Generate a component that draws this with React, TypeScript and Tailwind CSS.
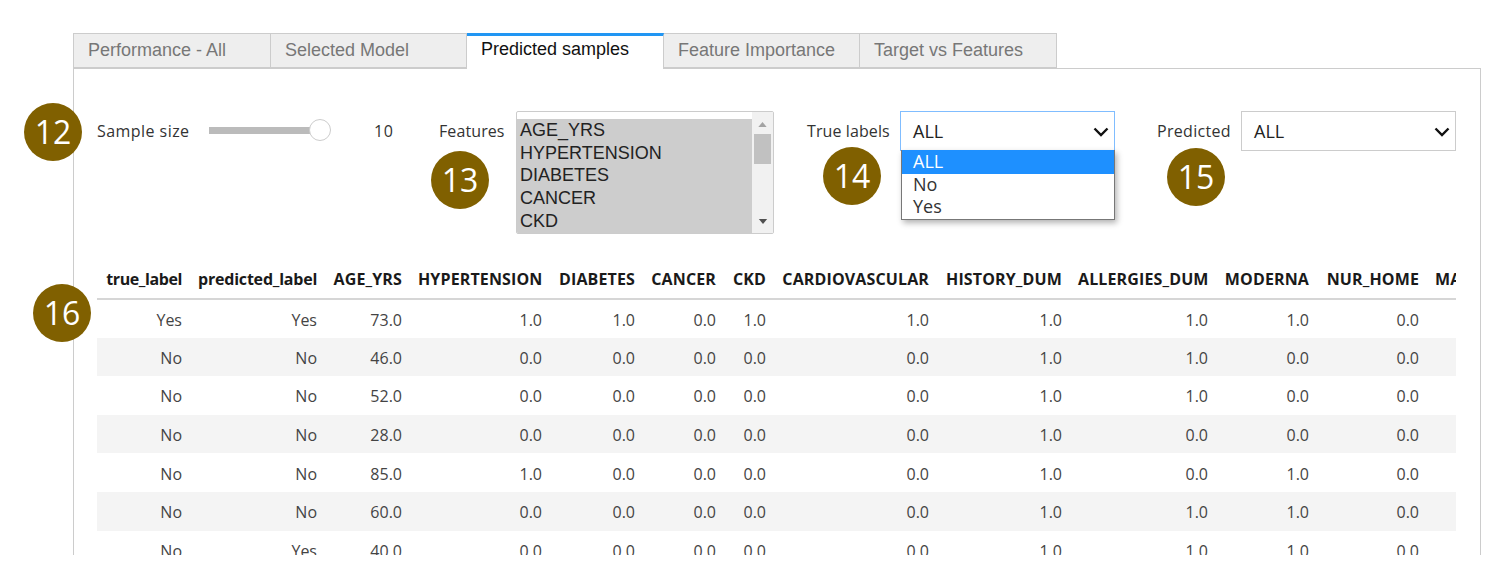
import React from 'react';

const tabs = [
  { label: 'Performance - All', width: 'w-[198px]' },
  { label: 'Selected Model', width: 'w-[196px]' },
  { label: 'Predicted samples', width: 'w-[197px]', active: true },
  { label: 'Feature Importance', width: 'w-[196px]' },
  { label: 'Target vs Features', width: 'w-[197px]' },
];

const columns = [
  { name: 'true_label', width: 'w-[93px]', extra: 'tracking-[-0.4px]' },
  { name: 'predicted_label', width: 'w-[135px]', extra: 'tracking-[-0.2px]' },
  { name: 'AGE_YRS', width: 'w-[85px]' },
  { name: 'HYPERTENSION', width: 'w-[140px]' },
  { name: 'DIABETES', width: 'w-[93px]' },
  { name: 'CANCER', width: 'w-[81px]' },
  { name: 'CKD', width: 'w-[50px]' },
  { name: 'CARDIOVASCULAR', width: 'w-[163px]' },
  { name: 'HISTORY_DUM', width: 'w-[133px]' },
  { name: 'ALLERGIES_DUM', width: 'w-[146px]' },
  { name: 'MODERNA', width: 'w-[101px]' },
  { name: 'NUR_HOME', width: 'w-[110px]' },
  { name: 'MALE', width: 'w-[60px]' },
];

const rows = [
  ['Yes', 'Yes', '73.0', '1.0', '1.0', '0.0', '1.0', '1.0', '1.0', '1.0', '1.0', '0.0', ''],
  ['No', 'No', '46.0', '0.0', '0.0', '0.0', '0.0', '0.0', '1.0', '1.0', '0.0', '0.0', ''],
  ['No', 'No', '52.0', '0.0', '0.0', '0.0', '0.0', '0.0', '1.0', '1.0', '0.0', '0.0', ''],
  ['No', 'No', '28.0', '0.0', '0.0', '0.0', '0.0', '0.0', '1.0', '0.0', '0.0', '0.0', ''],
  ['No', 'No', '85.0', '1.0', '0.0', '0.0', '0.0', '0.0', '1.0', '0.0', '1.0', '0.0', ''],
  ['No', 'No', '60.0', '0.0', '0.0', '0.0', '0.0', '0.0', '1.0', '1.0', '1.0', '0.0', ''],
  ['No', 'Yes', '40.0', '0.0', '0.0', '0.0', '0.0', '0.0', '1.0', '1.0', '1.0', '0.0', ''],
];

const features = ['AGE_YRS', 'HYPERTENSION', 'DIABETES', 'CANCER', 'CKD'];

const Badge = ({ n, className }: { n: string; className: string }) => (
  <div className={`absolute flex h-[58px] w-[58px] items-center justify-center rounded-full bg-[#806000] text-[32px] text-white ${className}`}>
    {n}
  </div>
);

const Chevron = () => (
  <svg width="16" height="10" viewBox="0 0 16 10" className="absolute right-[5px] top-[15px]">
    <path d="M1.5 1.5 L8 8 L14.5 1.5" fill="none" stroke="#111" strokeWidth="2.4" />
  </svg>
);

const Select = ({ focused }: { focused?: boolean }) => (
  <div className={`relative h-[40px] w-[215px] border pl-[12px] text-[18px] leading-[38px] text-[#222] ${focused ? 'border-[#80bdff]' : 'border-[#ccc]'}`}>
    ALL
    <Chevron />
  </div>
);

export default function App() {
  return (
    <div className="relative h-[576px] w-[1503px] overflow-hidden bg-white pl-[73px] pt-[33px] font-['Open_Sans',sans-serif]">
      <div className="flex h-[35px] font-['Liberation_Sans',sans-serif] text-[18px]">
        {tabs.map((t) => (
          <div
            key={t.label}
            className={
              t.active
                ? `${t.width} relative z-10 h-[36px] border-t-[3px] border-r border-t-[#2196f3] border-r-[#ccc] bg-white pl-[14px] leading-[26px] text-[#111]`
                : `${t.width} border border-l-0 first:border-l border-[#ccc] bg-[#eee] pl-[14px] leading-[33px] text-[#777]`
            }
          >
            {t.label}
          </div>
        ))}
      </div>

      <div className="h-[487px] w-[1408px] overflow-hidden border-x border-t border-[#ccc] pl-[23px] pt-[42px]">
        <div className="flex items-start text-[16px] leading-[40px] text-[#333]">
          <div className="w-[112px] tracking-[0.45px]">Sample size</div>
          <div className="relative mt-[16px] h-[7px] w-[122px]">
            <div className="h-[7px] w-[105px] bg-[#bbb]" />
            <div className="absolute left-[100px] top-[-8px] h-[22px] w-[22px] rounded-full border border-[#ccc] bg-white" />
          </div>
          <div className="w-[108px] pl-[43px] tracking-[0.5px]">10</div>
          <div className="w-[77px] tracking-[0.1px]">Features</div>

          <div className="flex h-[123px] w-[258px] overflow-hidden rounded-[2px] border border-[#ccc] font-['Liberation_Sans',sans-serif] text-[18px] leading-[22.7px] text-[#222]">
            <div className="mt-[7px] w-[235px] bg-[#cdcdcd] pl-[3px]">
              {features.map((f) => (
                <div key={f}>{f}</div>
              ))}
            </div>
            <div className="flex w-[21px] flex-col items-center bg-[#f1f1f1] pt-[10px]">
              <svg width="9" height="5" viewBox="0 0 10 6">
                <path d="M5 0 L10 6 L0 6 Z" fill="#a3a3a3" />
              </svg>
              <div className="mt-[7px] h-[30px] w-[17px] bg-[#c1c1c1]" />
              <svg width="10" height="5" viewBox="0 0 10 6" className="mt-[55px]">
                <path d="M0 0 L10 0 L5 6 Z" fill="#505050" />
              </svg>
            </div>
          </div>

          <div className="ml-[33px] w-[93px] tracking-[0.1px]">True labels</div>
          <Select focused />
          <div className="ml-[42px] w-[84px] tracking-[0.3px]">Predicted</div>
          <Select />
        </div>

        <div className="mt-[25px] w-[1359px] overflow-hidden">
          <table className="w-[1390px] table-fixed border-collapse text-[16px] text-[#444]">
            <thead>
              <tr className="h-[40px] border-b-2 border-[#d6d6d6] text-[#1a1a1a]">
                {columns.map((c) => (
                  <th key={c.name} className={`${c.width} ${c.extra ?? 'tracking-[0.13px]'} whitespace-nowrap px-[8px] text-right font-bold`}>
                    {c.name}
                  </th>
                ))}
              </tr>
            </thead>
            <tbody>
              {rows.map((r, i) => (
                <tr key={i} className="h-[38.6px] even:bg-[#f4f4f4]">
                  {r.map((v, j) => (
                    <td key={j} className="px-[8px] pt-[2px] text-right">
                      {v}
                    </td>
                  ))}
                </tr>
              ))}
            </tbody>
          </table>
        </div>
      </div>

      <div className="absolute left-[901px] top-[150px] z-20 h-[70px] w-[214px] border border-[#777] bg-white text-[18px] leading-[22.5px] text-[#333] shadow-[2px_3px_6px_rgba(0,0,0,0.3)]">
        <div className="-mt-[1px] h-[24px] bg-[#1e90ff] pl-[11px] text-white">ALL</div>
        <div className="-mt-[1px] pl-[11px]">No</div>
        <div className="-mt-[1px] pl-[11px]">Yes</div>
      </div>

      <Badge n="12" className="left-[24px] top-[103px]" />
      <Badge n="13" className="left-[431px] top-[151px]" />
      <Badge n="14" className="left-[823px] top-[147px]" />
      <Badge n="15" className="left-[1167px] top-[148px]" />
      <Badge n="16" className="left-[33px] top-[284px]" />
    </div>
  );
}
